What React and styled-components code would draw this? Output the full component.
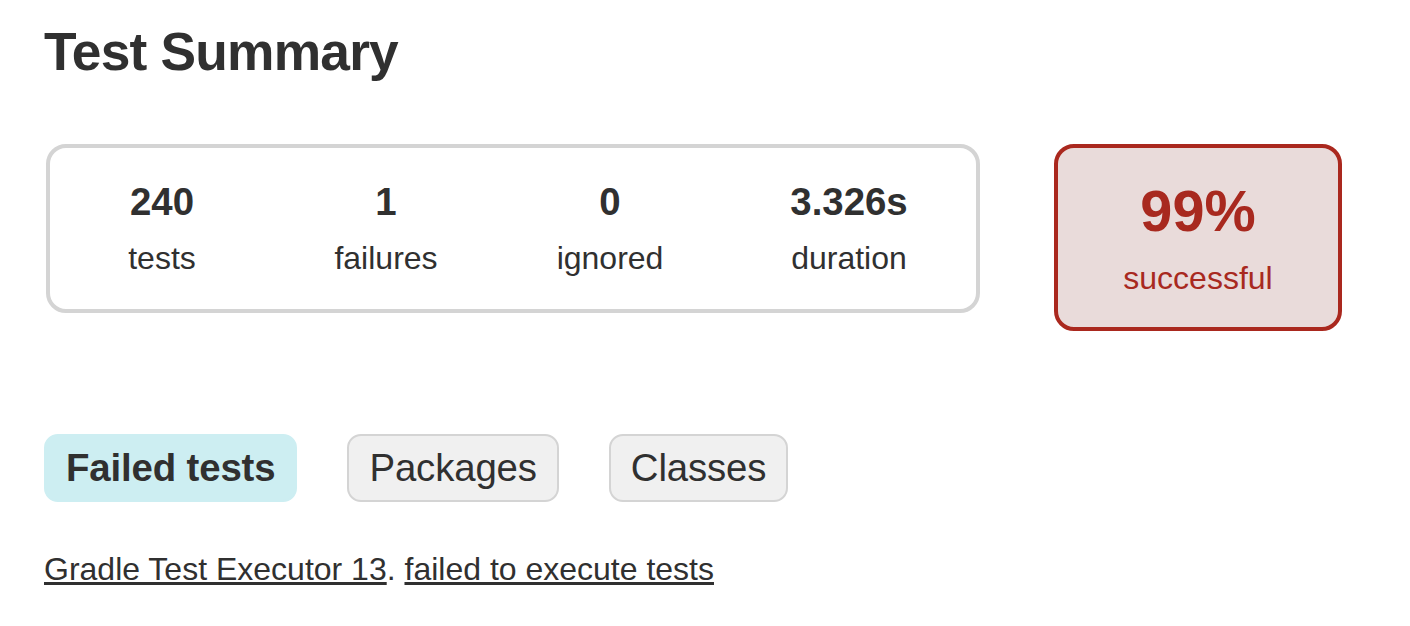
import React from "react";
import styled, { createGlobalStyle, css } from "styled-components";

const GlobalStyle = createGlobalStyle`
  html, body {
    margin: 0;
    padding: 0;
    background: #ffffff;
  }
  body {
    font-family: "Liberation Sans", Helvetica, Arial, sans-serif;
    font-size: 32px;
    color: #303030;
  }
`;

const Content = styled.div`
  padding: 21px 44px;
`;

const Title = styled.h1`
  margin: 0;
  font-size: 53.33px;
  font-weight: bold;
  line-height: normal;
  letter-spacing: -0.8px;
`;

const SummaryRow = styled.div`
  display: flex;
  align-items: flex-start;
  margin-top: 62px;
  padding-left: 2px;
`;

const SummaryGroup = styled.div`
  display: flex;
  padding: 2px 0;
  border: 4px solid #d4d4d4;
  border-radius: 20px;
`;

const InfoBox = styled.div`
  width: ${(p) => p.$width}px;
  padding: 30px 2px;
  text-align: center;
`;

const Counter = styled.p`
  margin: 0 0 16px;
  font-size: 38.4px;
  font-weight: bold;
  line-height: normal;
`;

const Label = styled.p`
  margin: 0;
  line-height: normal;
`;

const SuccessRate = styled.div`
  width: 280px;
  margin-left: 74px;
  padding: 30px 0;
  text-align: center;
  border: 4px solid #aa281e;
  border-radius: 20px;
  background: #e9dbda;
  color: #a8291f;
`;

const Percent = styled(Counter)`
  font-size: 57.6px;
`;

const TabList = styled.ul`
  display: flex;
  margin: 83px 0 0;
  padding: 20px 0;
  list-style: none;
`;

const Tab = styled.li`
  padding: 10px 20px;
  margin-right: 50px;
  border: 2px solid #d4d4d4;
  border-radius: 14px;
  background: #f0f0f0;
  font-size: 38.4px;
  line-height: normal;
  letter-spacing: -0.15px;
  color: #303030;

  ${(p) =>
    p.$selected &&
    css`
      background: #cdeef2;
      border-color: #cdeef2;
      font-weight: bold;
    `}
`;

const LinkList = styled.ul`
  margin: 29px 0 0;
  padding: 0;
  list-style: none;
  line-height: normal;
`;

const Link = styled.a`
  color: #303030;
  text-decoration: underline;
`;

const stats = [
  { value: "240", label: "tests", width: 220 },
  { value: "1", label: "failures", width: 220 },
  { value: "0", label: "ignored", width: 220 },
  { value: "3.326s", label: "duration", width: 250 },
];

const tabs = ["Failed tests", "Packages", "Classes"];

export default function App() {
  return (
    <>
      <GlobalStyle />
      <Content>
        <Title>Test Summary</Title>
        <SummaryRow>
          <SummaryGroup>
            {stats.map((s) => (
              <InfoBox key={s.label} $width={s.width}>
                <Counter>{s.value}</Counter>
                <Label>{s.label}</Label>
              </InfoBox>
            ))}
          </SummaryGroup>
          <SuccessRate>
            <Percent>99%</Percent>
            <Label>successful</Label>
          </SuccessRate>
        </SummaryRow>
        <TabList>
          {tabs.map((t, i) => (
            <Tab key={t} $selected={i === 0}>
              {t}
            </Tab>
          ))}
        </TabList>
        <LinkList>
          <li>
            <Link href="#executor">Gradle Test Executor 13</Link>.{" "}
            <Link href="#failure">failed to execute tests</Link>
          </li>
        </LinkList>
      </Content>
    </>
  );
}
